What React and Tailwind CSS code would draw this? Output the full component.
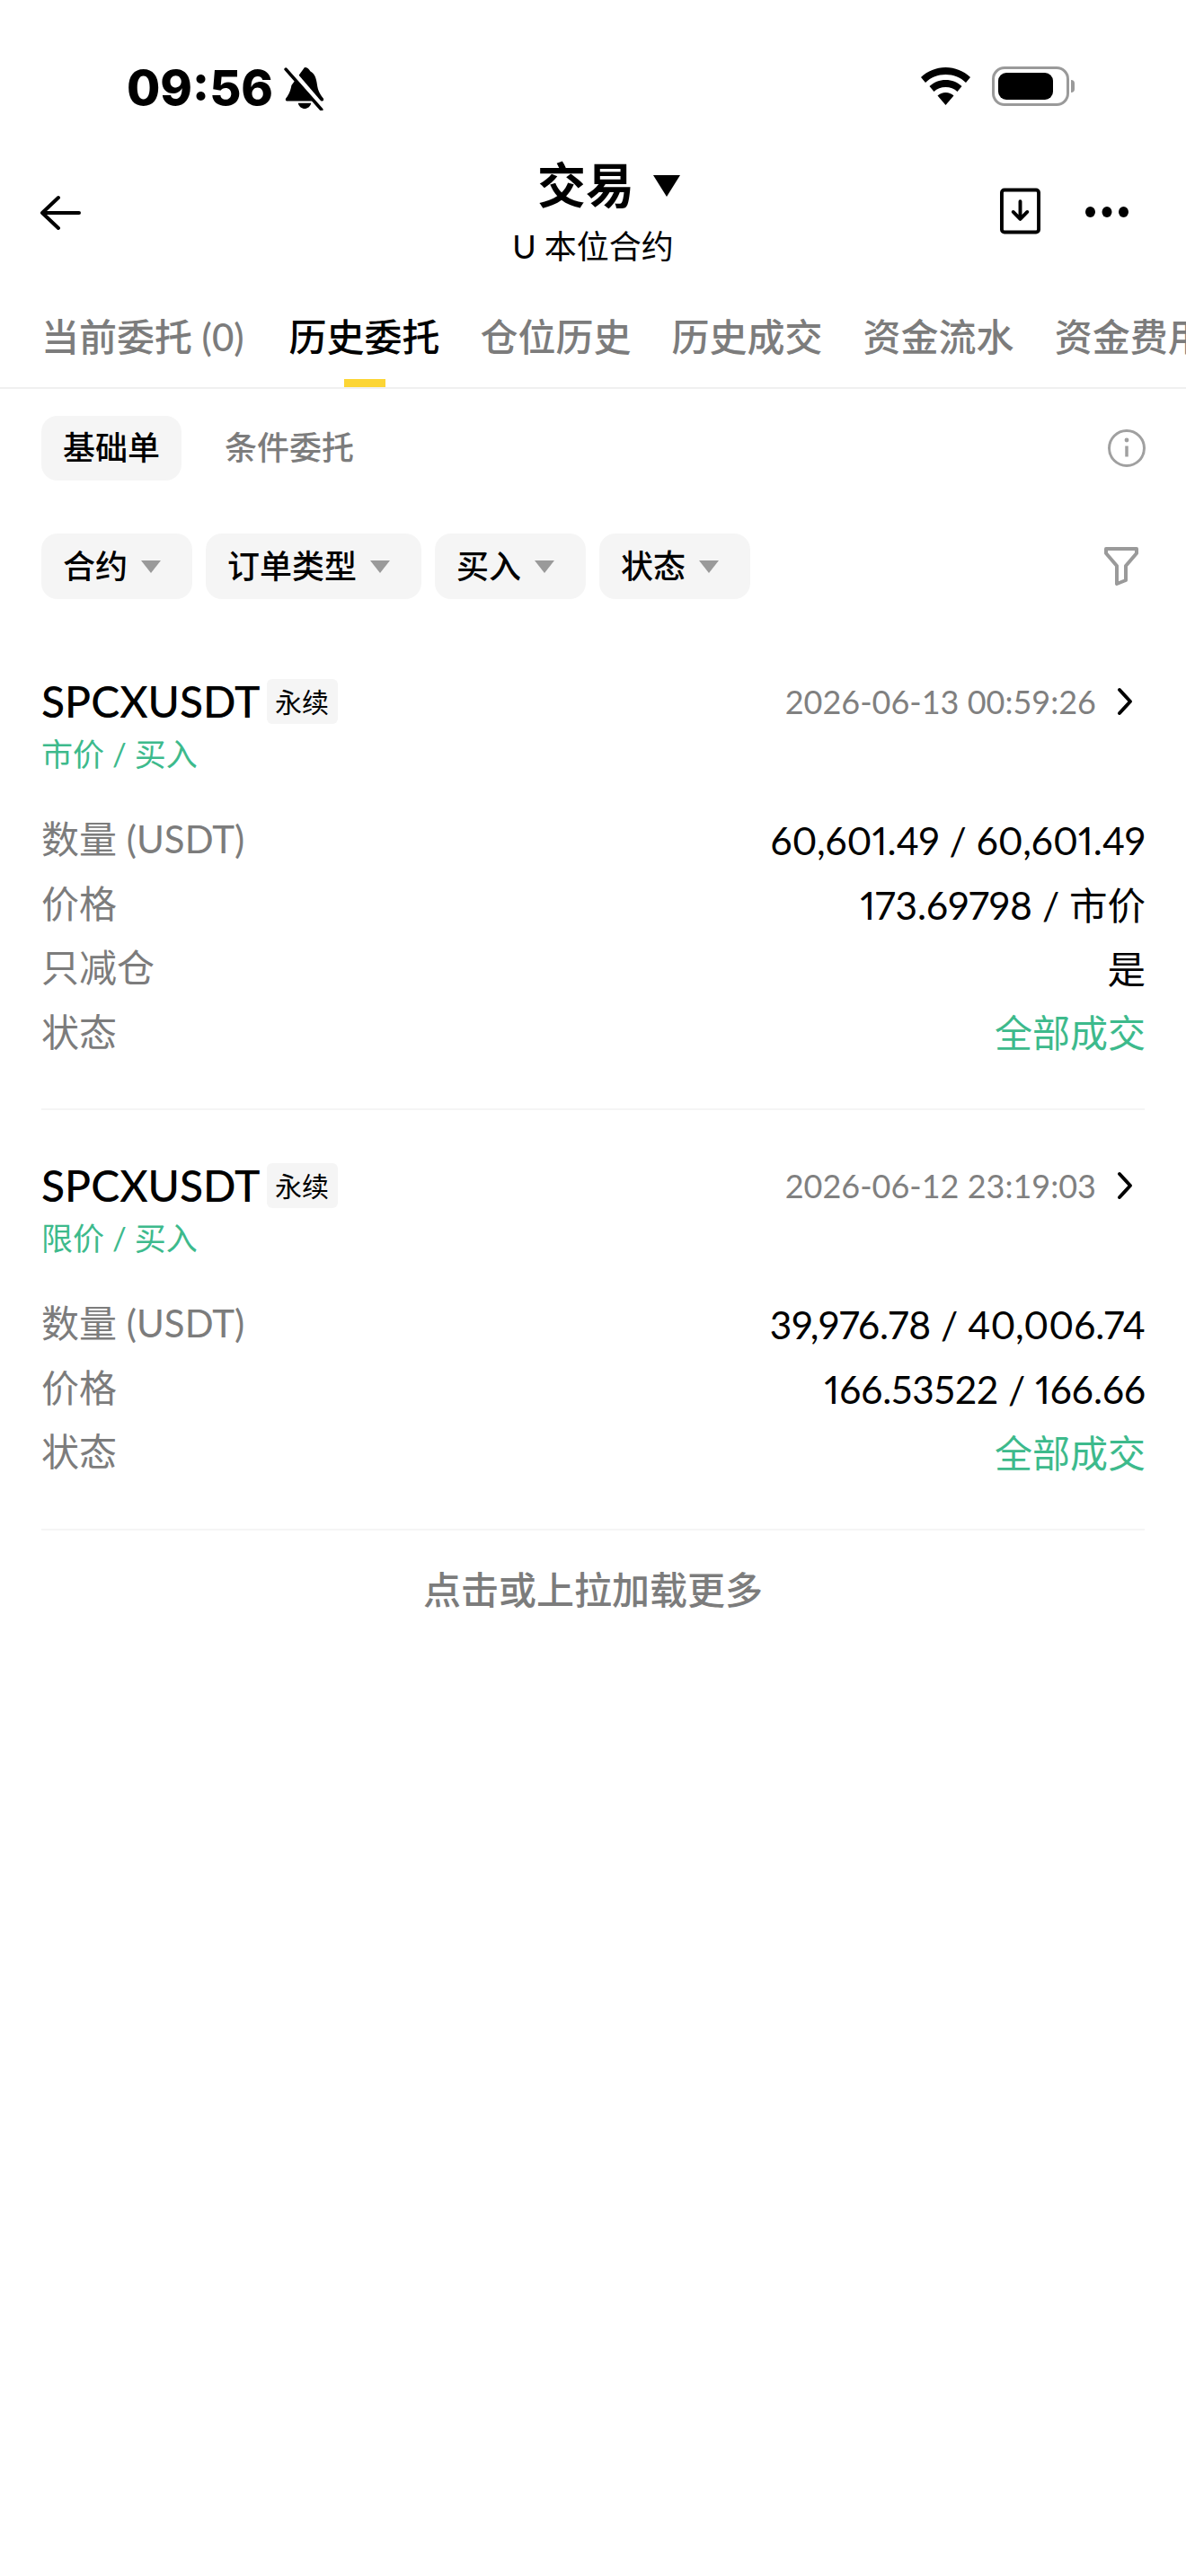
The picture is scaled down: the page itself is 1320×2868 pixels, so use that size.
import React from 'react';

const FONT = "font-['Lato','Noto_Sans_CJK_SC',sans-serif]";

const tabs = ['当前委托 (0)', '历史委托', '仓位历史', '历史成交', '资金流水', '资金费用'];
const filters = ['合约', '订单类型', '买入', '状态'];

const orders = [
    {
        id: 1,
        time: '2026-06-13 00:59:26',
        kind: '市价 / 买入',
        rows: [
            ['数量 (USDT)', '60,601.49 / 60,601.49'],
            ['价格', '173.69798 / 市价'],
            ['只减仓', '是'],
        ],
    },
    {
        id: 2,
        time: '2026-06-12 23:19:03',
        kind: '限价 / 买入',
        rows: [
            ['数量 (USDT)', '39,976.78 / 40,006.74'],
            ['价格', '166.53522 / 166.66'],
        ],
    },
];

const StatusBar = () => (
    <div className="h-[166px] pl-[141px] pr-[124px] pt-[66px] flex items-start justify-between">
        <div className="flex items-center gap-[11px]">
            <span className="font-['Inter'] text-[54px] leading-[64px] font-extrabold">09:56</span>
            <svg width="48" height="50" viewBox="0 0 46 48">
                <path d="M23 2c3 0 5 2 6 4 4 2 6 6 7 12 1 7 2 11 7 17 1 2 0 3-2 3H5c-2 0-3-1-2-3 4-5 5-9 6-14z" fill="#000" />
                <path d="M16 40h14c-1 4-4 6-7 6s-6-2-7-6z" fill="#000" />
                <path d="M6 3l36 42" stroke="#fff" strokeWidth="7" />
                <path d="M3 4l38 43" stroke="#000" strokeWidth="3.5" strokeLinecap="round" />
            </svg>
        </div>
        <div className="flex items-center gap-[23px] pt-[8px]">
            <svg width="57" height="42" viewBox="0 0 57 42">
                <path d="M28.5 0C18 0 8.5 4 1 11l5 6c6-6 14-9 22.500-9S45 11 51 17l5-6C48.500 4 39 0 28.500 0z" fill="#000" />
                <path d="M28.500 14c-7 0-13 2.500-18 7l5 6c3.500-3.200 8-5 13-5s9.500 1.800 13 5l5-6c-5-4.500-11-7-18-7z" fill="#000" />
                <path d="M28.500 28c-3.500 0-6.500 1.200-9 3.500l9 10.500 9-10.500c-2.500-2.300-5.500-3.500-9-3.500z" fill="#000" />
            </svg>
            <div className="flex items-center gap-[2px]">
                <div className="w-[86px] h-[44px] rounded-[14px] border-[3px] border-[#9a9a9a] p-[4px]">
                    <div className="w-[61px] h-full rounded-[9px] bg-black" />
                </div>
                <div className="w-[4px] h-[14px] rounded-r-full bg-[#9a9a9a]" />
            </div>
        </div>
    </div>
);

const NavBar = () => (
    <div className="h-[140px] px-[44px] grid grid-cols-[1fr_auto_1fr] items-center">
        <svg width="46" height="40" viewBox="0 0 46 40" fill="none" stroke="#000" strokeWidth="4" strokeLinecap="round" strokeLinejoin="round" className="mt-[2px]">
            <path d="M3 20h41M21 3L3 20l18 17" />
        </svg>
        <div className="flex flex-col items-center -mt-[4px]">
            <div className="flex items-center gap-[20px] h-[76px] ml-[36px]">
                <span className="text-[54px] leading-[76px] font-bold">交易</span>
                <svg width="32" height="26" viewBox="0 0 32 26">
                    <path d="M1 1h30L16 25z" fill="#000" />
                </svg>
            </div>
            <span className="text-[36px] leading-[50px] mt-[4px]">U 本位合约</span>
        </div>
        <div className="flex items-center justify-end gap-[50px] mr-[20px]">
            <svg width="45" height="52" viewBox="0 0 46 52" fill="none" stroke="#000" className="-mt-[2px]">
                <rect x="2" y="2" width="42" height="48" rx="3" strokeWidth="4" />
                <path d="M23 15v20M15 27l8 8 8-8" strokeWidth="4" strokeLinecap="round" strokeLinejoin="round" />
            </svg>
            <svg width="48" height="12" viewBox="0 0 48 12" fill="#000">
                <ellipse cx="5.500" cy="6" rx="5.500" ry="6" />
                <ellipse cx="24" cy="6" rx="5.500" ry="6" />
                <ellipse cx="42.500" cy="6" rx="5.500" ry="6" />
            </svg>
        </div>
    </div>
);

const TabBar = () => (
    <div className="h-[127px] pl-[46px] flex gap-[45px] overflow-hidden border-b-2 border-[#f0f0f0]">
        {tabs.map((tab, i) => {
            const active = tab === '历史委托';
            return (
                <div key={tab} className={`relative shrink-0 pt-[40px] ${i === 0 ? 'pr-[5px]' : ''}`}>
                    <span className={`text-[42px] leading-[58px] font-medium whitespace-nowrap ${active ? 'text-black' : 'text-[#7c7c7c]'}`}>
                        {tab}
                    </span>
                    {active && <div className="absolute bottom-0 left-1/2 -translate-x-1/2 w-[46px] h-[9px] bg-[#fcd535]" />}
                </div>
            );
        })}
    </div>
);

const SubTabs = () => (
    <div className="mt-[30px] px-[46px] flex items-center justify-between h-[72px]">
        <div className="flex items-center gap-[48px]">
            <div className="h-[72px] px-[24px] pb-[2px] rounded-[18px] bg-[#f5f5f5] flex items-center text-[36px] font-medium">基础单</div>
            <div className="pb-[2px] text-[36px] font-medium text-[#7c7c7c]">条件委托</div>
        </div>
        <svg width="44" height="44" viewBox="0 0 44 44" fill="none" stroke="#a0a0a0" strokeWidth="3" className="mr-[-2px]">
            <circle cx="22" cy="22" r="19.500" />
            <path d="M22 19.500v12" strokeWidth="3.500" />
            <circle cx="22" cy="13" r="2.400" fill="#a0a0a0" stroke="none" />
        </svg>
    </div>
);

const FilterBar = () => (
    <div className="mt-[59px] px-[46px] flex items-center justify-between h-[73px]">
        <div className="flex items-center gap-[15px]">
            {filters.map((name) => (
                <div key={name} className="h-[73px] pl-[24px] pr-[34px] rounded-[18px] bg-[#f5f5f5] flex items-center gap-[14px]">
                    <span className="text-[36px] font-medium pb-[2px]">{name}</span>
                    <svg width="24" height="16" viewBox="0 0 24 16">
                        <path d="M1 1h22L12 15z" fill="#9a9a9a" />
                    </svg>
                </div>
            ))}
        </div>
        <svg width="40" height="44" viewBox="0 0 40 44" fill="none" stroke="#9a9a9a" strokeWidth="4" strokeLinejoin="round" className="mr-[6px] -mt-[2px]">
            <path d="M3 3h34v5L25 22v16l-10 4V22L3 8z" />
        </svg>
    </div>
);

const Row = ({ label, value, green }) => (
    <div className="h-[71.500px] flex items-center justify-between text-[42px]">
        <span className="text-[#7c7c7c]">{label}</span>
        <span className={`proportional-nums pt-[3px] mr-[-1px] ${green ? 'text-[#3dba8c]' : 'text-[42.500px] text-black'}`}>{value}</span>
    </div>
);

const OrderCard = ({ order }) => (
    <div className="mx-[46px] pt-[52px] pb-[49px] border-b-2 border-[#f5f5f5]">
        <div className="flex items-center justify-between h-[64px]">
            <div className="flex items-center gap-[7px]">
                <span className="text-[48px] font-medium">SPCXUSDT</span>
                <span className="h-[50px] w-[79px] rounded-[6px] bg-[#f5f5f5] flex items-center justify-center text-[30px]">永续</span>
            </div>
            <div className="flex items-center gap-[22px]">
                <span className="text-[36px] text-[#808080]">{order.time}</span>
                <svg width="20" height="32" viewBox="0 0 20 32" fill="none" stroke="#000" strokeWidth="4" strokeLinecap="round" strokeLinejoin="round" className="mr-[12px]">
                    <path d="M4 3l12 13L4 29" />
                </svg>
            </div>
        </div>
        <div className="text-[35px] leading-[52px] text-[#3dba8c]">{order.kind}</div>
        <div className="mt-[34px]">
            {order.rows.map(([label, value]) => (
                <Row key={label} label={label} value={value} />
            ))}
            <Row label="状态" value="全部成交" green />
        </div>
    </div>
);

const App = () => (
    <div className={`w-[1320px] h-[2868px] bg-white text-black overflow-hidden ${FONT}`}>
        <StatusBar />
        <NavBar />
        <TabBar />
        <SubTabs />
        <FilterBar />
        <div className="mt-[30px]">
            {orders.map((order) => (
                <OrderCard key={order.id} order={order} />
            ))}
        </div>
        <div className="mt-[36px] text-center text-[42px] leading-[60px] font-medium text-[#7c7c7c]">点击或上拉加载更多</div>
    </div>
);

export default App;
